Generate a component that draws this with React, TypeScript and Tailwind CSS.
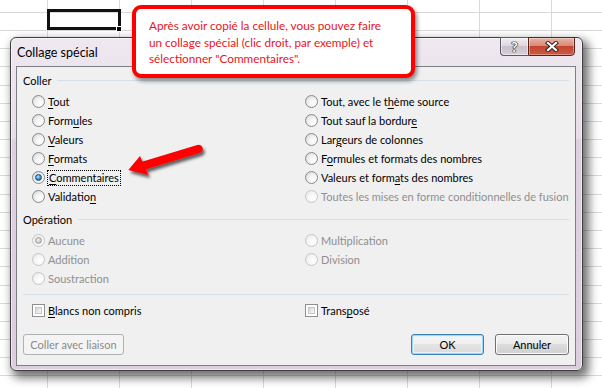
import clsx from "clsx"

const rowHeights = [
  "h-[13px]", "h-[18px]", "h-[18px]", "h-[18px]", "h-[19px]", "h-[18px]", "h-[18px]", "h-[18px]",
  "h-[18px]", "h-[18px]", "h-[19px]", "h-[18px]", "h-[18px]", "h-[18px]", "h-[18px]", "h-[19px]",
  "h-[18px]", "h-[18px]", "h-[18px]", "h-[18px]", "h-[18px]", "h-[18px]",
]
const colWidths = ["w-[48px]", "w-[72px]", "w-[72px]", "w-[72px]", "w-[72px]", "w-[72px]", "w-[72px]", "w-[72px]", "w-[72px]"]

type Parts = [string, string, string]

const collerLeft: { label: Parts; checked?: boolean; focus?: boolean }[] = [
  { label: ["", "T", "out"] },
  { label: ["Form", "u", "les"] },
  { label: ["", "V", "aleurs"] },
  { label: ["", "F", "ormats"] },
  { label: ["", "C", "ommentaires"], checked: true, focus: true },
  { label: ["Validatio", "n", ""] },
]

const collerRight: { label: Parts; disabled?: boolean }[] = [
  { label: ["Tout, avec le t", "h", "ème source"] },
  { label: ["Tout sauf la bordur", "e", ""] },
  { label: ["Lar", "g", "eurs de colonnes"] },
  { label: ["F", "o", "rmules et formats des nombres"] },
  { label: ["Valeurs et form", "a", "ts des nombres"] },
  { label: ["Toutes les mises en forme conditionnelles de fusion", "", ""], disabled: true },
]

function Sheet() {
  return (
    <div className="flex flex-col">
      {rowHeights.map((h, r) => (
        <div key={r} className={clsx("flex shrink-0", h)}>
          {colWidths.map((w, c) => (
            <div key={c} className={clsx("shrink-0 border-r border-b border-[#d9d9d9]", w)} />
          ))}
        </div>
      ))}
    </div>
  )
}

function Label({ parts }: { parts: Parts }) {
  const [a, k, b] = parts
  return (
    <>
      {a}
      {k && <span className="underline decoration-1 underline-offset-[2px]">{k}</span>}
      {b}
    </>
  )
}

function Radio({ checked, disabled }: { checked?: boolean; disabled?: boolean }) {
  return (
    <span
      className={clsx(
        "flex h-[13px] w-[13px] shrink-0 items-center justify-center rounded-full border",
        disabled
          ? "border-[#c6c6c6] bg-[radial-gradient(circle_at_65%_65%,#ffffff_0%,#f4f4f4_55%,#e4e4e4_100%)]"
          : "border-[#8a8a8a] bg-[radial-gradient(circle_at_68%_68%,#ffffff_0%,#f2f2f2_45%,#cfcfcf_100%)]"
      )}
    >
      {checked &&
        (disabled ? (
          <span className="h-[7px] w-[7px] rounded-full border border-[#9c9c9c] bg-[radial-gradient(circle_at_40%_35%,#eeeeee_0%,#b4b4b4_100%)]" />
        ) : (
          <span className="h-[7px] w-[7px] rounded-full border border-[#1d4f7c] bg-[radial-gradient(circle_at_40%_35%,#c6ecff_0%,#3a9ad8_45%,#10508a_100%)]" />
        ))}
    </span>
  )
}

function RadioRow({
  label,
  checked,
  disabled,
  focus,
}: {
  label: Parts
  checked?: boolean
  disabled?: boolean
  focus?: boolean
}) {
  return (
    <div className="flex h-[19px] items-center gap-[3px]">
      <Radio checked={checked} disabled={disabled} />
      <span
        className={clsx(
          "whitespace-nowrap",
          focus && "-ml-[1px] border border-dotted border-black px-[1px] leading-[14px]",
          disabled ? "text-[#8f8f8f]" : "text-black"
        )}
      >
        <Label parts={label} />
      </span>
    </div>
  )
}

function Check({ label }: { label: Parts }) {
  return (
    <div className="flex h-[19px] items-center gap-[3px]">
      <span className="flex h-[13px] w-[13px] shrink-0 border border-[#8e8f8f] bg-white p-[2px]">
        <span className="flex-1 border border-[#c2c5c9] bg-[linear-gradient(135deg,#d4d4d4_0%,#ebebeb_60%,#f8f8f8_100%)]" />
      </span>
      <span className="whitespace-nowrap text-black">
        <Label parts={label} />
      </span>
    </div>
  )
}

function GroupHeader({ title }: { title: string }) {
  return (
    <div className="flex h-[19px] items-center gap-[6px]">
      <span className="text-black">{title}</span>
      <div className="h-px flex-1 bg-[#d5dfe5]" />
    </div>
  )
}

function Dialog() {
  return (
    <div className="absolute top-[37px] left-[10px] flex h-[334px] w-[573px] flex-col rounded-[6px] border border-[#3e3e3e] bg-[linear-gradient(180deg,#efe8f0_0%,#e7dde8_30%,#ddd0df_31%,#dccfdd_100%)] shadow-[inset_0_0_0_1px_rgba(255,255,255,0.55),4px_5px_10px_2px_rgba(0,0,0,0.55)]">
      <div className="relative flex h-[28px] shrink-0 items-center pl-[6px] pt-[1px] text-[12.5px] text-black">
        Collage spécial
        <div className="absolute top-[-1px] right-[7px] flex h-[19px]">
          <div className="flex w-[28px] items-center justify-center rounded-bl-[4px] border border-r-0 border-[#5e5a62] bg-[linear-gradient(180deg,#f1edf3_0%,#ddd7e0_45%,#c8c0cc_50%,#d6d0da_100%)] shadow-[inset_0_0_0_1px_rgba(255,255,255,0.5)]">
            <span className="text-[14px] leading-none font-bold text-white [text-shadow:0_0_1px_#1e1e1e,0_0_1px_#1e1e1e,0_0_1px_#1e1e1e,0_0_1px_#1e1e1e]">
              ?
            </span>
          </div>
          <div className="flex w-[47px] items-center justify-center rounded-br-[4px] border border-[#5b2219] bg-[linear-gradient(180deg,#eab3a6_0%,#d98b7a_45%,#c4452f_50%,#cd5a43_100%)] shadow-[inset_0_0_0_1px_rgba(255,255,255,0.35)]">
            <svg width="14" height="11" viewBox="0 0 14 11">
              <path d="M3 2 L11 9 M11 2 L3 9" stroke="#2a2a2a" strokeWidth="4.2" strokeLinecap="square" />
              <path d="M3 2 L11 9 M11 2 L3 9" stroke="#ffffff" strokeWidth="2.2" strokeLinecap="square" />
            </svg>
          </div>
        </div>
      </div>

      <div className="mr-[6px] mb-[4px] ml-[5px] flex flex-1 flex-col border border-[#7d7f85] bg-[#f0f0f0] px-[6px] pt-[4px]">
        <GroupHeader title="Coller" />
        <div className="mt-[2px] grid grid-cols-[282px_1fr]">
          <div className="flex flex-col pl-[9px]">
            {collerLeft.map((it, i) => (
              <RadioRow key={i} label={it.label} checked={it.checked} focus={it.focus} />
            ))}
          </div>
          <div className="flex flex-col">
            {collerRight.map((it, i) => (
              <RadioRow key={i} label={it.label} disabled={it.disabled} />
            ))}
          </div>
        </div>

        <div className="mt-[4px]">
          <GroupHeader title="Opération" />
        </div>
        <div className="mt-[2px] grid grid-cols-[282px_1fr]">
          <div className="flex flex-col pl-[9px]">
            <RadioRow label={["Aucune", "", ""]} checked disabled />
            <RadioRow label={["Addition", "", ""]} disabled />
            <RadioRow label={["Soustraction", "", ""]} disabled />
          </div>
          <div className="flex flex-col">
            <RadioRow label={["Multiplication", "", ""]} disabled />
            <RadioRow label={["Division", "", ""]} disabled />
          </div>
        </div>

        <div className="mt-[6px] h-px bg-[#d5dfe5]" />

        <div className="mt-[6px] grid grid-cols-[282px_1fr]">
          <div className="pl-[9px]">
            <Check label={["", "B", "lancs non compris"]} />
          </div>
          <Check label={["Trans", "p", "osé"]} />
        </div>

        <div className="mt-[14px] flex h-[21px]">
          <div className="flex w-[101px] items-center justify-center rounded-[3px] border border-[#adb2b5] bg-[#f4f4f4] text-[#8a8a8a]">
            Coller avec liaison
          </div>
          <div className="ml-auto flex w-[73px] items-center justify-center rounded-[3px] border border-[#3c7fb1] bg-[linear-gradient(180deg,#f6f6f6_0%,#efefef_50%,#e4e4e4_50%,#dadada_100%)] text-black shadow-[inset_0_0_0_1px_#9fd6f4,inset_0_0_0_2px_#e4f4fc]">
            OK
          </div>
          <div className="ml-[11px] flex w-[74px] items-center justify-center rounded-[3px] border border-[#707070] bg-[linear-gradient(180deg,#f2f2f2_0%,#ebebeb_50%,#dddddd_50%,#cfcfcf_100%)] text-black shadow-[inset_0_0_0_1px_#fbfbfb]">
            Annuler
          </div>
        </div>
      </div>
    </div>
  )
}

export default function App() {
  return (
    <div className="relative h-[388px] w-[602px] overflow-hidden bg-white text-[11px] leading-[14px] [font-family:Lato,'Noto_Sans',sans-serif]">
      <Sheet />

      {/* selected cell */}
      <div className="absolute top-[9px] left-[47px] h-[21px] w-[74px] border-[3px] border-[#111111]" />
      <div className="absolute top-[26px] left-[116px] h-[6px] w-[6px] border border-white bg-black" />

      <Dialog />

      {/* callout */}
      <div className="absolute top-[5px] left-[132px] h-[73px] w-[283px] rounded-[9px] border-[4px] border-[#ff0000] bg-white pt-[9px] pl-[13px] text-[11.75px] leading-[16.5px] text-[#e8141c] shadow-[2px_3px_4px_rgba(0,0,0,0.45)]">
        <div>Après avoir copié la cellule, vous pouvez faire</div>
        <div>un collage spécial (clic droit, par exemple) et</div>
        <div>sélectionner "Commentaires".</div>
      </div>

      {/* arrow */}
      <svg className="absolute top-[136px] left-[118px]" width="96" height="50" viewBox="0 0 96 50">
        <defs>
          <filter id="arrowShadow" x="-20%" y="-30%" width="150%" height="190%">
            <feDropShadow dx="2" dy="3" stdDeviation="1.6" floodColor="#000000" floodOpacity="0.6" />
          </filter>
        </defs>
        <g filter="url(#arrowShadow)" fill="#ff0000">
          <line x1="26" y1="29.5" x2="80.5" y2="13" stroke="#ff0000" strokeWidth="8.5" strokeLinecap="round" />
          <polygon points="10.3,34 22,20 30.3,39" />
        </g>
      </svg>
    </div>
  )
}
